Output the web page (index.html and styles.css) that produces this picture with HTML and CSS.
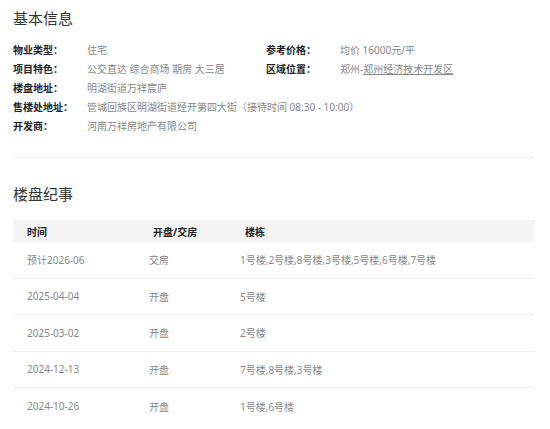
FILE: index.html
```html
<!DOCTYPE html>
<html lang="zh-CN">
<head>
<meta charset="utf-8">
<title>楼盘信息</title>
<link rel="stylesheet" href="styles.css">
</head>
<body>
<div class="page">
  <section class="basic">
    <h2 class="title">基本信息</h2>
    <div class="info">
      <div class="item"><span class="label">物业类型：</span><span class="value">住宅</span></div>
      <div class="item"><span class="label">参考价格：</span><span class="value">均价 16000元/平</span></div>
      <div class="item"><span class="label">项目特色：</span><span class="value">公交直达 综合商场 期房 大三居</span></div>
      <div class="item"><span class="label">区域位置：</span><span class="value">郑州-<a class="link" href="#">郑州经济技术开发区</a></span></div>
      <div class="item wide"><span class="label">楼盘地址：</span><span class="value">明湖街道万祥宸庐</span></div>
      <div class="item wide"><span class="label">售楼处地址：</span><span class="value">管城回族区明湖街道经开第四大街（接待时间 08:30 - 10:00）</span></div>
      <div class="item wide"><span class="label">开发商：</span><span class="value">河南万祥房地产有限公司</span></div>
    </div>
  </section>
  <section class="history">
    <h2 class="title">楼盘纪事</h2>
    <div class="table">
      <div class="row head"><span class="c1">时间</span><span class="c2">开盘/交房</span><span class="c3">楼栋</span></div>
      <div class="row"><span class="c1">预计2026-06</span><span class="c2">交房</span><span class="c3">1号楼,2号楼,8号楼,3号楼,5号楼,6号楼,7号楼</span></div>
      <div class="row"><span class="c1">2025-04-04</span><span class="c2">开盘</span><span class="c3">5号楼</span></div>
      <div class="row"><span class="c1">2025-03-02</span><span class="c2">开盘</span><span class="c3">2号楼</span></div>
      <div class="row"><span class="c1">2024-12-13</span><span class="c2">开盘</span><span class="c3">7号楼,8号楼,3号楼</span></div>
      <div class="row"><span class="c1">2024-10-26</span><span class="c2">开盘</span><span class="c3">1号楼,6号楼</span></div>
    </div>
  </section>
</div>
</body>
</html>
```

FILE: styles.css
```css
* { box-sizing: border-box; }
html, body { margin: 0; padding: 0; background: #fff; }
body {
  font-family: "Noto Sans", "Noto Sans CJK SC", sans-serif;
  color: #333;
}
.page {
  width: 521px;
  margin-left: 13px;
  padding-top: 8px;
}
.title {
  margin: 0;
  font-family: "Noto Sans CJK SC", sans-serif;
  font-size: 15px;
  line-height: 20px;
  font-weight: normal;
  color: #333;
}
.basic {
  padding-bottom: 21px;
  border-bottom: 1px solid #ececec;
}
.info {
  margin-top: 13px;
  display: grid;
  grid-template-columns: 253px 268px;
  font-size: 10px;
  line-height: 19px;
}
.item {
  display: flex;
  white-space: nowrap;
}
.item.wide { grid-column: 1 / 3; }
.label {
  width: 74px;
  flex: none;
  font-weight: bold;
  color: #222;
}
.value { color: #888; }
.link { color: #888; text-decoration: underline; }
.history { padding-top: 26px; }
.table {
  margin-top: 16px;
  font-size: 10px;
}
.row {
  display: flex;
  align-items: center;
  height: 36.5px;
  border-bottom: 1px solid #ececec;
  padding-left: 14px;
  color: #888;
  white-space: nowrap;
}
.row:last-child { border-bottom: none; }
.row .c1 { width: 122px; flex: none; }
.row .c2 { width: 91px; flex: none; }
.row .c3 { flex: 1; }
.row.head {
  height: 22px;
  background: #f4f4f4;
  border-bottom: none;
  font-weight: bold;
  color: #222;
}
.row.head .c1 { width: 126px; }
.row.head .c2 { width: 92px; }
```
